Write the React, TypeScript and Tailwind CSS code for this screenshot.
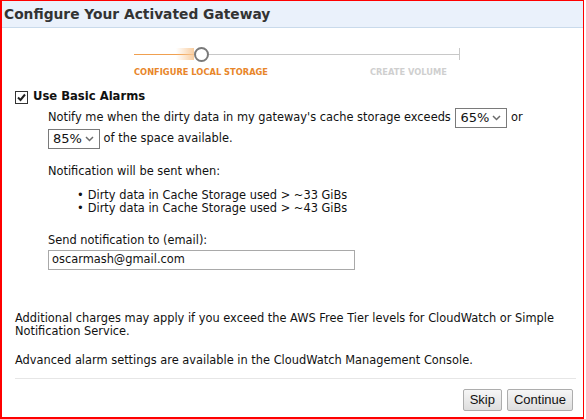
import React from 'react';

function Chevron() {
    return (
        <svg width="9" height="6" viewBox="0 0 9 6" className="ml-auto">
            <path d="M1 1 L4.5 4.5 L8 1" fill="none" stroke="#6b6b6b" strokeWidth="1.5" />
        </svg>
    );
}

function Select({ value, className }: { value: string; className?: string }) {
    return (
        <span className={`inline-flex items-center h-[20px] w-[52px] border border-[#7a7a7a] bg-white pl-[4px] pr-[5px] text-[13px] align-middle ${className ?? ''}`}>
            {value}
            <Chevron />
        </span>
    );
}

export default function App() {
    return (
        <div className="w-[584px] h-[419px] bg-white border-l-2 border-t border-r border-b-2 border-[#ff0000] font-['DejaVu_Sans',sans-serif] text-[11.4px] text-[#111] overflow-hidden">
            <div className="h-[27px] bg-[#eaf1fb] border-b border-[#c9daeb] pl-[2px] pt-[3px]">
                <h1 className="text-[13.8px] font-bold text-[#333] leading-[20px]">Configure Your Activated Gateway</h1>
            </div>

            <div className="pl-[132px] pt-[18px]">
                <div className="flex items-center h-[16px]">
                    <div className="relative w-[60px] h-[12px] flex items-center">
                        <div className="h-px w-full bg-[#f0a050]" />
                        <div className="absolute right-0 top-0 h-[12px] w-[18px] bg-[linear-gradient(to_right,rgba(248,200,150,0),rgba(248,200,150,0.9))]" />
                    </div>
                    <div className="w-[15px] h-[15px] rounded-full border-2 border-[#7a7a7a] bg-white shrink-0" />
                    <div className="h-px w-[250px] bg-[#c8c8c8]" />
                    <div className="w-px h-[12px] bg-[#c8c8c8]" />
                </div>
                <div className="flex w-[327px] justify-between pr-[14px] pt-[4px] text-[8.3px] font-bold leading-[12px]">
                    <span className="text-[#e8862a]">CONFIGURE LOCAL STORAGE</span>
                    <span className="text-[#cfcfcf]">CREATE VOLUME</span>
                </div>
            </div>

            <div className="pl-[13px] pt-[11px]">
                <div className="flex items-center gap-[5px] h-[16px]">
                    <span className="w-[13px] h-[13px] border border-[#333] bg-white flex items-center justify-center">
                        <svg width="11" height="11" viewBox="0 0 11 11">
                            <path d="M2 5.5 L4.5 8 L9 2.5" fill="none" stroke="#222" strokeWidth="2" />
                        </svg>
                    </span>
                    <span className="text-[11.6px] font-bold text-[#111]">Use Basic Alarms</span>
                </div>

                <div className="pl-[33px] pr-[20px]">
                    <div className="pt-[2px] leading-[21px]">
                        Notify me when the dirty data in my gateway's cache storage exceeds{' '}
                        <Select value="65%" className="ml-[1px]" /> or
                    </div>
                    <div className="leading-[21px]">
                        <Select value="85%" /> of the space available.
                    </div>

                    <div className="pt-[14px] leading-[16px]">Notification will be sent when:</div>
                    <ul className="pt-[10px] pl-[29px] list-none">
                        <li className="flex gap-[4px] h-[13px] leading-[13px]"><span>•</span>Dirty data in Cache Storage used &gt; ~33 GiBs</li>
                        <li className="flex gap-[4px] h-[13px] leading-[13px]"><span>•</span>Dirty data in Cache Storage used &gt; ~43 GiBs</li>
                    </ul>

                    <div className="pt-[17px] leading-[16px]">Send notification to (email):</div>
                    <div className="mt-[2px] w-[307px] h-[20px] border border-[#a9a9a9] flex items-center pl-[3px]">
                        oscarmash@gmail.com
                    </div>
                </div>

                <div className="pt-[42px] pr-[12px] leading-[13px]">
                    Additional charges may apply if you exceed the AWS Free Tier levels for CloudWatch or Simple Notification Service.
                </div>
                <div className="pt-[16px] leading-[13px]">
                    Advanced alarm settings are available in the CloudWatch Management Console.
                </div>

                <div className="mt-[11px] mr-[7px] h-px bg-[#e6e6e6]" />

                <div className="flex justify-end gap-[5px] pt-[10px] pr-[10px] font-['Liberation_Sans',sans-serif] text-[13px]">
                    <button className="h-[22px] px-[6px] border border-[#adadad] bg-[linear-gradient(#f6f6f6,#dedede)] rounded-[2px] text-[#111]">Skip</button>
                    <button className="h-[22px] px-[6px] border border-[#adadad] bg-[linear-gradient(#f6f6f6,#dedede)] rounded-[2px] text-[#111]">Continue</button>
                </div>
            </div>
        </div>
    );
}
